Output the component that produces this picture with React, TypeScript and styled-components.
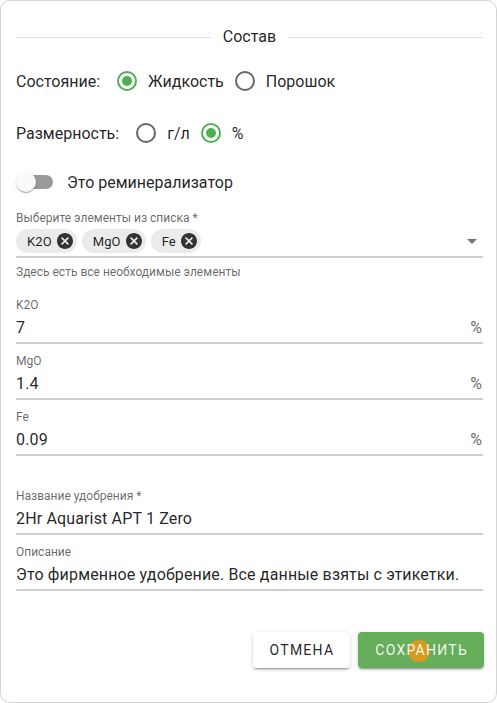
import React from 'react';
import styled, { createGlobalStyle } from 'styled-components';

const GlobalStyle = createGlobalStyle`
  html, body {
    margin: 0;
    padding: 0;
    background: #ffffff;
  }
  body {
    font-family: Roboto, "Noto Sans", "Liberation Sans", sans-serif;
    color: rgba(0, 0, 0, 0.87);
  }
  * {
    box-sizing: border-box;
  }
`;

const GREEN = '#4caf50';

const Card = styled.div`
  width: 497px;
  height: 703px;
  border: 1px solid #d4d4d4;
  border-radius: 10px;
  padding: 24px 13px 0 15px;
  display: flex;
  flex-direction: column;
`;

const SectionTitle = styled.div`
  display: flex;
  align-items: center;
  gap: 12px;
  height: 24px;
  font-size: 16px;
  line-height: 24px;

  &::before,
  &::after {
    content: '';
    flex: 1;
    height: 1px;
    background: #e0e0e0;
  }
`;

const RadioRow = styled.div<{ $top: number }>`
  display: flex;
  align-items: center;
  height: 42px;
  margin-top: ${({ $top }) => $top}px;
  font-size: 16px;
`;

const RowLabel = styled.span`
  margin-right: 6px;
`;

const Option = styled.label`
  display: flex;
  align-items: center;
`;

const RadioCircle = styled.span<{ $checked?: boolean }>`
  width: 20px;
  height: 20px;
  margin: 0 11px;
  border-radius: 50%;
  border: 2px solid
    ${({ $checked }) => ($checked ? GREEN : 'rgba(0, 0, 0, 0.6)')};
  display: flex;
  align-items: center;
  justify-content: center;

  &::after {
    content: '';
    width: 10px;
    height: 10px;
    border-radius: 50%;
    background: ${GREEN};
    display: ${({ $checked }) => ($checked ? 'block' : 'none')};
  }
`;

const SwitchRow = styled.div`
  display: flex;
  align-items: center;
  gap: 14px;
  height: 38px;
  margin-top: 9px;
  font-size: 16px;
`;

const SwitchBox = styled.span`
  position: relative;
  width: 37px;
  height: 20px;
  display: flex;
  align-items: center;
`;

const Track = styled.span`
  margin-left: 3px;
  width: 34px;
  height: 14px;
  border-radius: 7px;
  background: #999999;
`;

const Thumb = styled.span`
  position: absolute;
  left: 0;
  top: 0;
  width: 20px;
  height: 20px;
  border-radius: 50%;
  background: #fafafa;
  box-shadow: 0 2px 1px -1px rgba(0, 0, 0, 0.2), 0 1px 1px 0 rgba(0, 0, 0, 0.14),
    0 1px 3px 0 rgba(0, 0, 0, 0.12);
`;

const Field = styled.div<{ $top: number }>`
  display: flex;
  flex-direction: column;
  margin-top: ${({ $top }) => $top}px;
`;

const FieldLabel = styled.div`
  font-size: 12px;
  line-height: 16px;
  color: rgba(0, 0, 0, 0.6);
`;

const InputLine = styled.div<{ $height: number }>`
  display: flex;
  align-items: center;
  height: ${({ $height }) => $height}px;
  border-bottom: 2px solid #cfcfcf;
  font-size: 16px;
  letter-spacing: 0.15px;
`;

const Value = styled.span`
  flex: 1;
`;

const Adornment = styled.span`
  color: rgba(0, 0, 0, 0.6);
  margin-right: 1px;
`;

const ChipList = styled.div`
  flex: 1;
  display: flex;
  align-items: center;
  gap: 5px;
`;

const Chip = styled.span`
  display: inline-flex;
  align-items: center;
  height: 24px;
  border-radius: 12px;
  background: #ebebeb;
  padding: 0 4px 0 11px;
  gap: 5px;
  font-size: 13px;
  letter-spacing: 0.1px;
  color: rgba(0, 0, 0, 0.87);
`;

const ArrowIcon = styled.svg`
  width: 24px;
  height: 24px;
  fill: rgba(0, 0, 0, 0.54);
  margin-right: -1px;
`;

const HelperText = styled.div`
  font-size: 12px;
  line-height: 16px;
  margin-top: 6px;
  color: rgba(0, 0, 0, 0.6);
`;

const Actions = styled.div`
  display: flex;
  justify-content: flex-end;
  gap: 8px;
  margin-top: 41px;
  margin-right: -1px;
`;

const Button = styled.button<{ $primary?: boolean }>`
  position: relative;
  height: 36px;
  padding: 0 16px 0 17px;
  border: none;
  border-radius: 4px;
  font-family: Roboto, "Noto Sans", sans-serif;
  font-size: 14px;
  font-weight: 400;
  letter-spacing: 1.25px;
  text-transform: uppercase;
  background: ${({ $primary }) => ($primary ? '#66ad5c' : '#ffffff')};
  color: ${({ $primary }) =>
    $primary ? 'rgba(255, 255, 255, 0.92)' : 'rgba(0, 0, 0, 0.87)'};
  box-shadow: 0 3px 1px -2px rgba(0, 0, 0, 0.2), 0 2px 2px 0 rgba(0, 0, 0, 0.14),
    0 1px 5px 0 rgba(0, 0, 0, 0.12);
  overflow: hidden;
`;

const Label = styled.span`
  position: relative;
`;

const ClickDot = styled.span`
  position: absolute;
  left: 50px;
  top: 8px;
  width: 22px;
  height: 22px;
  border-radius: 50%;
  background: rgba(245, 150, 20, 0.8);
`;

const CancelIcon = () => (
  <svg width="16" height="16" viewBox="2 2 20 20" fill="#333">
    <path d="M12 2C6.47 2 2 6.47 2 12s4.47 10 10 10 10-4.47 10-10S17.53 2 12 2zm5 13.59L15.59 17 12 13.41 8.41 17 7 15.59 10.59 12 7 8.41 8.41 7 12 10.59 15.59 7 17 8.41 13.41 12 17 15.59z" />
  </svg>
);

const elements = [
  { name: 'K2O', value: '7' },
  { name: 'MgO', value: '1.4' },
  { name: 'Fe', value: '0.09' },
];

export default function App() {
  return (
    <>
      <GlobalStyle />
      <Card>
        <SectionTitle>Состав</SectionTitle>

        <RadioRow $top={11}>
          <RowLabel>Состояние:</RowLabel>
          <Option>
            <RadioCircle $checked />
            Жидкость
          </Option>
          <Option>
            <RadioCircle />
            Порошок
          </Option>
        </RadioRow>

        <RadioRow $top={10}>
          <RowLabel>Размерность:</RowLabel>
          <Option>
            <RadioCircle />
            г/л
          </Option>
          <Option>
            <RadioCircle $checked />%
          </Option>
        </RadioRow>

        <SwitchRow>
          <SwitchBox>
            <Track />
            <Thumb />
          </SwitchBox>
          Это реминерализатор
        </SwitchRow>

        <Field $top={9}>
          <FieldLabel>Выберите элементы из списка *</FieldLabel>
          <InputLine $height={32}>
            <ChipList>
              {elements.map((el) => (
                <Chip key={el.name}>
                  {el.name}
                  <CancelIcon />
                </Chip>
              ))}
            </ChipList>
            <ArrowIcon viewBox="0 0 24 24">
              <path d="M7 10l5 5 5-5z" />
            </ArrowIcon>
          </InputLine>
          <HelperText>Здесь есть все необходимые элементы</HelperText>
        </Field>

        {elements.map((el, i) => (
          <Field key={el.name} $top={i === 0 ? 17 : 9}>
            <FieldLabel>{el.name}</FieldLabel>
            <InputLine $height={31}>
              <Value>{el.value}</Value>
              <Adornment>%</Adornment>
            </InputLine>
          </Field>
        ))}

        <Field $top={32}>
          <FieldLabel>Название удобрения *</FieldLabel>
          <InputLine $height={31}>
            <Value>2Hr Aquarist APT 1 Zero</Value>
          </InputLine>
        </Field>

        <Field $top={9}>
          <FieldLabel>Описание</FieldLabel>
          <InputLine $height={31}>
            <Value>Это фирменное удобрение. Все данные взяты с этикетки.</Value>
          </InputLine>
        </Field>

        <Actions>
          <Button>Отмена</Button>
          <Button $primary>
            <ClickDot />
            <Label>Сохранить</Label>
          </Button>
        </Actions>
      </Card>
    </>
  );
}
